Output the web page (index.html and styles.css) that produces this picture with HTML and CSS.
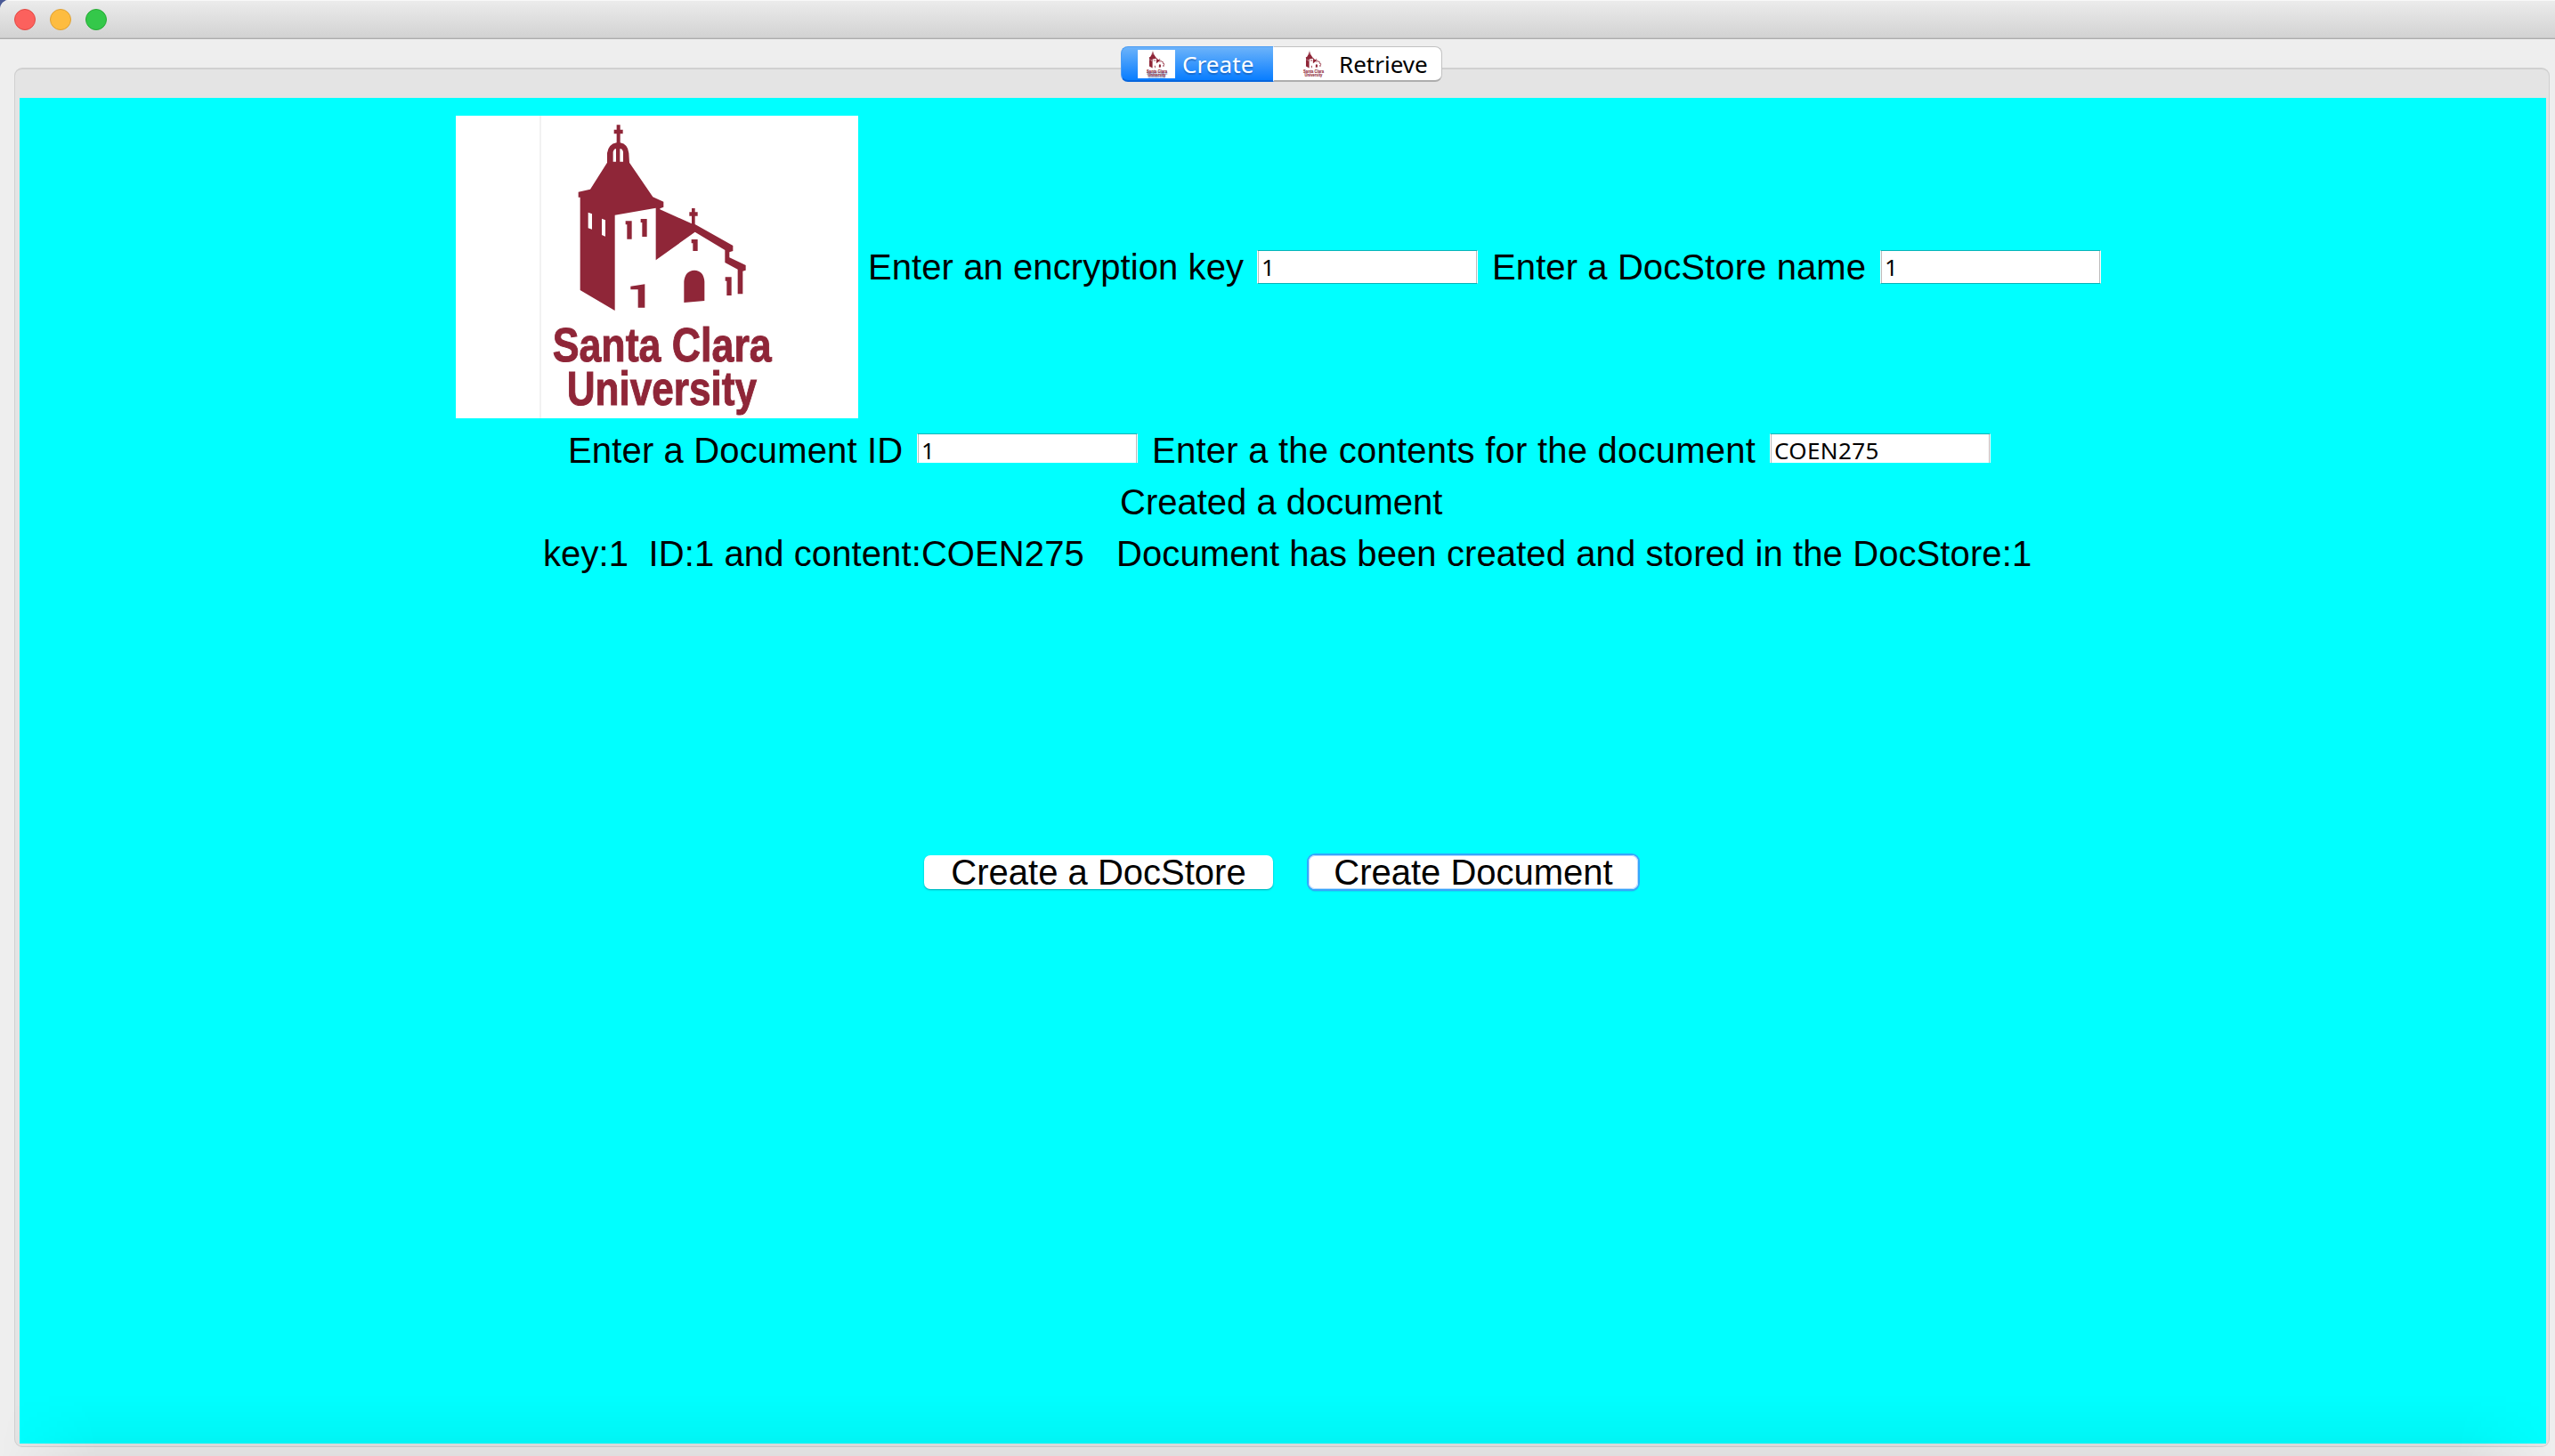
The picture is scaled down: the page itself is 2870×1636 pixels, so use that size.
FILE: index.html
```html
<!DOCTYPE html>
<html lang="en">
<head>
<meta charset="utf-8">
<title>DocStore</title>
<link rel="stylesheet" href="styles.css">
</head>
<body>
<div class="window">
  <header class="titlebar">
    <span class="light close"></span>
    <span class="light minimize"></span>
    <span class="light zoom"></span>
  </header>
  <main class="content">
    <nav class="tabs">
      <button class="tab active"><svg class="tab-icon" viewBox="36 30 1356 1020"><use href="#church"/></svg><span class="tab-create">Create</span></button>
      <button class="tab"><svg class="tab-icon" viewBox="36 30 1356 1020"><use href="#church"/></svg><span class="tab-retrieve">Retrieve</span></button>
    </nav>
    <section class="group">
      <div class="panel">
        <div class="row row-key">
          <div class="logo">
            <svg width="452" height="340" viewBox="36 30 1356 1020">
              <g id="church" fill="#8f2638">
                <path d="M578 61H590V77H599V91H590V121Q616 126 619 156L621 188L700 304L736 320V338L724 343V346L831 394V368H823V355H831V342H842V355H851V368H842V396L970 468V486L958 490V508L1013 534V551L1003 554V631H986V548L943 525V483L842 422L710 517V341L572 365V687L455 618V305H449V287L489 278L546 188V156Q550 126 578 121V91H569V77H578Z"/>
                <path d="M608 385H629V446H613V397H608ZM659 378H680V438H664V390H659ZM830 447H851V486H835V460H830ZM944 574H965V636H949V587H944ZM625 605L673 598V677H650V616H625ZM805 660V589Q809 552 840 551Q871 552 874 589V654Z"/>
                <path fill="#fff" d="M566 152Q570 139 576 142V185H566ZM589 142Q597 139 600 152V185H589ZM482 356L495 361V413L482 409ZM528 377L540 382V437L528 432Z"/>
                <text class="logo-text" x="362" y="857" textLength="738" lengthAdjust="spacingAndGlyphs">Santa Clara</text>
                <text class="logo-text" x="410" y="1006" textLength="640" lengthAdjust="spacingAndGlyphs">University</text>
              </g>
            </svg>
          </div>
          <label class="label label-key">Enter an encryption key</label>
          <div class="field">1</div>
          <label class="label label-store">Enter a DocStore name</label>
          <div class="field">1</div>
        </div>
        <div class="row row-doc">
          <label class="label label-id">Enter a Document ID</label>
          <div class="field clipped">1</div>
          <label class="label label-contents">Enter a the contents for the document</label>
          <div class="field clipped">COEN275</div>
        </div>
        <div class="row row-status">Created a document</div>
        <div class="row row-result"><span class="result">key:1&nbsp; ID:1 and content:COEN275</span><span>Document has been created and stored in the DocStore:1</span></div>
        <div class="row row-buttons">
          <button class="button button-store">Create a DocStore</button>
          <button class="button button-document">Create Document</button>
        </div>
      </div>
    </section>
  </main>
  <div class="shade"></div>
</div>
</body>
</html>
```
FILE: styles.css
```css
* { box-sizing: border-box; }
body { margin: 0; background: #4a5a96; overflow: hidden; }
button { border: 0; padding: 0; margin: 0; background: none; font: inherit; }
.window {
  position: relative;
  display: flex;
  flex-direction: column;
  width: 2870px;
  height: 1636px;
  background: #eee;
  border-top-left-radius: 10px;
  overflow: hidden;
}
.titlebar {
  display: flex;
  gap: 16px;
  height: 44px;
  padding: 10px 16px;
  background: linear-gradient(#ececec, #d2d2d2);
  border-bottom: 1px solid #adadad;
  box-shadow: inset 0 1px #f8f8f8, inset 0 -1px #c4c4c4;
}
.light { width: 24px; height: 24px; border-radius: 50%; border: 1px solid; }
.close { background: #fc615d; border-color: #e04944; }
.minimize { background: #fdbc40; border-color: #dea034; }
.zoom { background: #34c84a; border-color: #27aa35; }
.content { display: flex; flex-direction: column; padding: 8px 6px 0 16px; }
.tabs {
  display: flex;
  z-index: 1;
  width: 361px;
  height: 40px;
  margin-left: 1243px;
  margin-bottom: -16px;
  border-radius: 8px;
  font: 26px/36px "Noto Sans", sans-serif;
}
.tab {
  display: flex;
  align-items: center;
  width: 189px;
  height: 40px;
  padding-left: 19px;
  background: #fff;
  color: #000;
  border: 1px solid #c2c2c2;
  border-left: 0;
  border-bottom: 2px solid #adadad;
  border-radius: 0 8px 8px 0;
}
.tab.active {
  width: 172px;
  padding-left: 18px;
  color: #fff;
  background: linear-gradient(#6cb3fa, #087dff);
  border: 1px solid #4a9cf4;
  border-right-color: #fff;
  border-bottom: 2px solid #0866dd;
  border-radius: 8px 0 0 8px;
  text-shadow: 0 2px 1px #1650a080;
}
.tab-icon { flex: none; width: 42px; height: 32px; background: #fff; }
.tab:not(.active) .tab-icon { margin-left: 4px; }
.tab-create { margin-left: 8px; letter-spacing: .1px; }
.tab-retrieve { margin-left: 8px; }
.group {
  height: 1550px;
  padding: 32px 3px 3px 5px;
  border: 1px solid #d0d0d0;
  border-top-width: 2px;
  border-radius: 9px;
  background: #e4e4e4;
}
.panel {
  width: 2838px;
  height: 1512px;
  background: #0ff;
  color: #000;
  font: 40px/44px "Liberation Sans", Arial, sans-serif;
  white-space: nowrap;
}
.row { display: flex; align-items: center; height: 58px; }
.row-key { height: 380px; padding-left: 490px; margin-bottom: -13px; }
.row-doc { padding-left: 616px; }
.row-status { padding-left: 1236px; }
.row-result { padding-left: 588px; letter-spacing: .1px; }
.row-buttons { padding-left: 1016px; margin-top: 300px; }
.logo { width: 452px; height: 340px; background: linear-gradient(90deg, #fff 94px, #f2f2f2 94px 96px, #fff 96px); }
.logo svg { display: block; }
.logo-text { font: bold 162px "Liberation Sans Narrow", "Liberation Sans", sans-serif; stroke: #8f2638; stroke-width: 3px; }
.label-key { margin-left: 11px; width: 437px; letter-spacing: .08px; }
.label-store { margin-left: 16px; width: 436px; letter-spacing: .1px; }
.label-id { width: 392px; letter-spacing: .15px; }
.label-contents { margin-left: 16px; width: 694px; letter-spacing: .24px; }
.result { width: 644px; }
.field {
  width: 248px;
  height: 38px;
  padding-left: 4px;
  background: #fff;
  border: 1px solid #fff;
  border-top-color: #08b4b8;
  border-bottom-color: #08b4b8;
  box-shadow: inset 1px 0 #bbb, inset -1px 0 #bbb;
  font: 26px/36px "Noto Sans", sans-serif;
  letter-spacing: .4px;
}
.clipped { clip-path: inset(0 0 5px 0); }
.button { height: 38px; border-radius: 7px; background: #fff; line-height: 38px; }
.button-store { width: 392px; box-shadow: 0 1px 2px #007c8cb0; }
.button-document { width: 370px; margin-left: 40px; box-shadow: 0 0 0 2px #36a6fc, 0 2px 2px #258fd4, inset 0 0 0 1px #b8dafc; }
/* darkening along the window's bottom edge */
.shade {
  position: absolute;
  inset: auto 0 0 0;
  height: 70px;
  background: linear-gradient(#0000, #00000008 65%, #00000010);
  -webkit-mask: linear-gradient(90deg, #0000, #000 110px calc(100% - 110px), #0000);
  mask: linear-gradient(90deg, #0000, #000 110px calc(100% - 110px), #0000);
  pointer-events: none;
}
```
